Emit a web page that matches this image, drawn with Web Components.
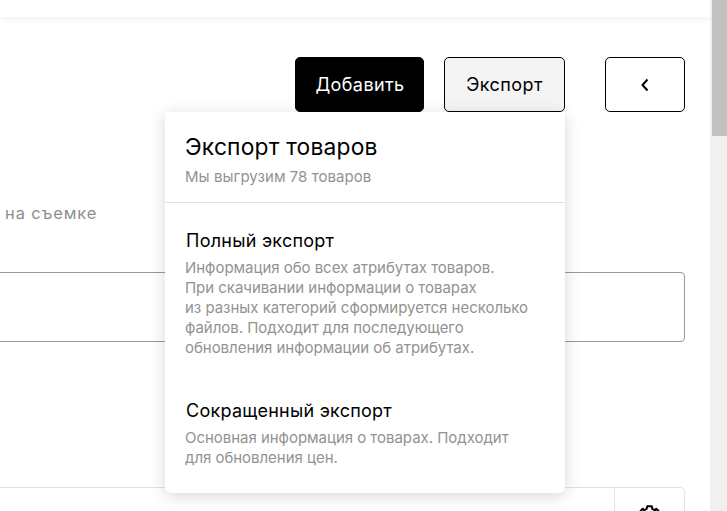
<!DOCTYPE html>
<html lang="ru">
<head>
<meta charset="utf-8">
<title>Экспорт</title>
<style>
    html, body { margin: 0; height: 511px; overflow: hidden; background: #fff; }
    body { font-family: Inter, "Liberation Sans", sans-serif; color: #000; }
</style>
</head>
<body>
<catalog-page></catalog-page>
<script>
(function () {
    class TopBar extends HTMLElement {
        connectedCallback() {
            this.attachShadow({ mode: 'open' });
            this.shadowRoot.innerHTML = `
                <style>
                    :host {
                        display: block;
                        height: 17px;
                        background: #fff;
                        box-shadow: 0 2px 6px rgba(0, 0, 0, 0.06);
                    }
                </style>
            `;
        }
    }

    class UiButton extends HTMLElement {
        connectedCallback() {
            this.attachShadow({ mode: 'open' });
            this.shadowRoot.innerHTML = `
                <style>
                    :host {
                        display: flex;
                        box-sizing: border-box;
                        height: 55px;
                        align-items: center;
                        justify-content: center;
                        border: 1px solid #000;
                        border-radius: 5px;
                        background: #fff;
                        color: #000;
                        font-size: 18px;
                        letter-spacing: 0.4px;
                    }
                    :host([variant="primary"]) { background: #000; color: #fff; padding-left: 1px; }
                    :host([variant="active"]) { background: #f4f4f4; }
                </style>
                <slot></slot>
            `;
        }
    }

    class ExportOption extends HTMLElement {
        connectedCallback() {
            const title = this.getAttribute('title-text') || '';
            this.attachShadow({ mode: 'open' });
            this.shadowRoot.innerHTML = `
                <style>
                    :host { display: block; }
                    h3 {
                        margin: 0 0 6px;
                        padding-left: 1px;
                        font-size: 18px;
                        line-height: 22px;
                        font-weight: 400;
                        letter-spacing: 0.25px;
                        color: #000;
                    }
                    .text {
                        font-size: 15px;
                        line-height: 20px;
                        letter-spacing: -0.03px;
                        color: #929292;
                        white-space: pre-line;
                    }
                </style>
                <h3>${title}</h3>
                <div class="text"><slot></slot></div>
            `;
        }
    }

    class ExportPopover extends HTMLElement {
        connectedCallback() {
            this.attachShadow({ mode: 'open' });
            this.shadowRoot.innerHTML = `
                <style>
                    :host {
                        position: absolute;
                        top: 100%;
                        right: 0;
                        width: 400px;
                        box-sizing: border-box;
                        background: #fff;
                        border-radius: 0 0 6px 6px;
                        box-shadow: 0 3px 16px rgba(0, 0, 0, 0.16);
                        z-index: 5;
                    }
                    header {
                        padding: 20px 20px 16px;
                        border-bottom: 1px solid #e2e2e2;
                    }
                    h2 {
                        margin: 0 0 6px;
                        font-size: 22.8px;
                        line-height: 30px;
                        font-weight: 400;
                        letter-spacing: 0.2px;
                    }
                    p {
                        margin: 0;
                        font-size: 15px;
                        line-height: 18px;
                        letter-spacing: 0.05px;
                        color: #929292;
                    }
                    .options {
                        display: flex;
                        flex-direction: column;
                        gap: 42px;
                        padding: 27px 20px 25px;
                    }
                </style>
                <header>
                    <h2>Экспорт товаров</h2>
                    <p>Мы выгрузим 78 товаров</p>
                </header>
                <div class="options"><slot></slot></div>
            `;
        }
    }

    class PageScrollbar extends HTMLElement {
        connectedCallback() {
            this.attachShadow({ mode: 'open' });
            this.shadowRoot.innerHTML = `
                <style>
                    :host {
                        display: block;
                        flex: 0 0 17px;
                        box-sizing: border-box;
                        padding-left: 2px;
                        background: #f0f0f0;
                    }
                    .thumb { height: 136px; background: #c1c1c1; }
                </style>
                <div class="thumb"></div>
            `;
        }
    }

    class ProductRow extends HTMLElement {
        connectedCallback() {
            this.attachShadow({ mode: 'open' });
            this.shadowRoot.innerHTML = `
                <style>
                    :host {
                        display: flex;
                        box-sizing: border-box;
                        height: 60px;
                        border: 1px solid #e2e2e2;
                        border-radius: 5px;
                        margin-left: -10px;
                    }
                    .grow { flex: 1; }
                    .gear {
                        flex: 0 0 69px;
                        display: flex;
                        justify-content: center;
                        padding-top: 16px;
                        border-left: 1px solid #e2e2e2;
                    }
                    svg { display: block; }
                </style>
                <div class="grow"></div>
                <div class="gear">
                    <svg width="27" height="27" viewBox="0 0 24 24" fill="none" stroke="#000" stroke-width="1.8" stroke-linejoin="round">
                        <circle cx="12" cy="12" r="3"></circle>
                        <path d="M10 2h4l.7 2.6 2.2.9L18 4.2 19.8 6l-1.3 1.1.9 2.2L22 10v4l-2.6.7-.9 2.2 1.3 1.1-1.8 1.8-1.1-1.3-2.2.9L14 22h-4l-.7-2.6-2.2-.9L6 19.8 4.2 18l1.3-1.1-.9-2.2L2 14v-4l2.6-.7.9-2.2L4.2 6 6 4.2l1.1 1.3 2.2-.9z"></path>
                    </svg>
                </div>
            `;
        }
    }

    class CatalogPage extends HTMLElement {
        connectedCallback() {
            this.attachShadow({ mode: 'open' });
            this.shadowRoot.innerHTML = `
                <style>
                    :host {
                        display: flex;
                        height: 511px;
                        overflow: hidden;
                        background: #fff;
                    }
                    .main { flex: 1; min-width: 0; overflow: hidden; }
                    .content { padding: 40px 25px 0 0; }
                    .actions {
                        display: flex;
                        justify-content: flex-end;
                    }
                    .export-group {
                        position: relative;
                        display: flex;
                        gap: 20px;
                    }
                    .add { width: 129px; }
                    .export { width: 121px; }
                    .back { width: 80px; margin-left: 40px; }
                    .back svg { display: block; }
                    .field-label {
                        margin-top: 91px;
                        padding-left: 5px;
                        font-size: 16.5px;
                        line-height: 20px;
                        letter-spacing: 0.9px;
                        color: #8e8e8e;
                    }
                    .field {
                        box-sizing: border-box;
                        height: 70px;
                        margin: 49px 0 0 -10px;
                        border: 1px solid #9a9a9a;
                        border-radius: 4px;
                    }
                    product-row { margin-top: 145px; }
                </style>
                <div class="main">
                    <top-bar></top-bar>
                    <div class="content">
                        <div class="actions">
                            <div class="export-group">
                                <ui-button class="add" variant="primary">Добавить</ui-button>
                                <ui-button class="export" variant="active">Экспорт</ui-button>
                                <export-popover>
                                    <export-option title-text="Полный экспорт">Информация обо всех атрибутах товаров.
При скачивании информации о товарах
из разных категорий сформируется несколько
файлов. Подходит для последующего
обновления информации об атрибутах.</export-option>
                                    <export-option title-text="Сокращенный экспорт">Основная информация о товарах. Подходит
для обновления цен.</export-option>
                                </export-popover>
                            </div>
                            <ui-button class="back">
                                <svg width="12" height="14" viewBox="0 0 12 14" fill="none" stroke="#000" stroke-width="2"><path d="M8.5 1.5 3.5 7l5 5.5"></path></svg>
                            </ui-button>
                        </div>
                        <div class="field-label">на съемке</div>
                        <div class="field"></div>
                        <product-row></product-row>
                    </div>
                </div>
                <page-scrollbar></page-scrollbar>
            `;
        }
    }

    customElements.define('top-bar', TopBar);
    customElements.define('ui-button', UiButton);
    customElements.define('export-option', ExportOption);
    customElements.define('export-popover', ExportPopover);
    customElements.define('page-scrollbar', PageScrollbar);
    customElements.define('product-row', ProductRow);
    customElements.define('catalog-page', CatalogPage);
})();
</script>
</body>
</html>
